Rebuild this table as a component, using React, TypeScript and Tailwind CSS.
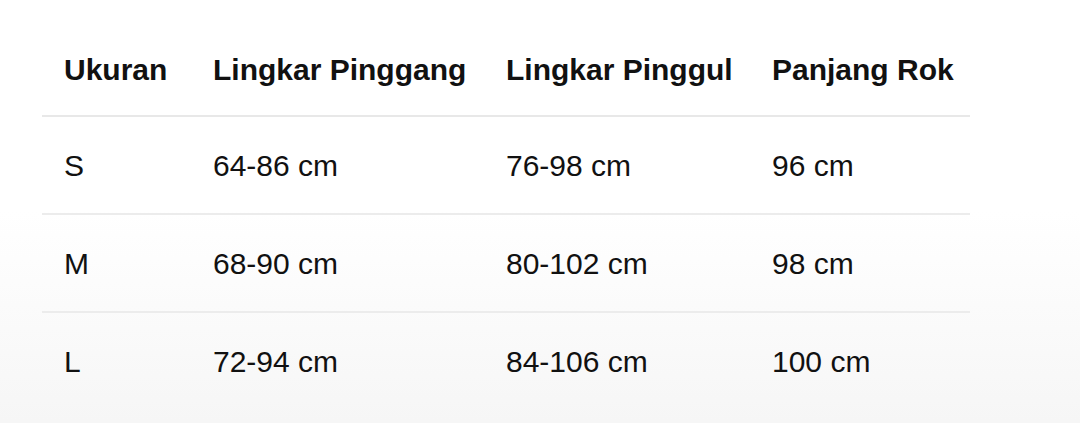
const headers = ['Ukuran', 'Lingkar Pinggang', 'Lingkar Pinggul', 'Panjang Rok'];

const rows = [
  ['S', '64-86 cm', '76-98 cm', '96 cm'],
  ['M', '68-90 cm', '80-102 cm', '98 cm'],
  ['L', '72-94 cm', '84-106 cm', '100 cm'],
];

const widths = ['w-[149px]', 'w-[293px]', 'w-[266px]', 'w-[220px]'];

export default function App() {
  return (
    <div
      className="h-[423px] w-[1080px] bg-gradient-to-b from-white from-50% to-[#f6f6f6] pt-[24px] pl-[42px] text-[#111]"
      style={{ fontFamily: '"Liberation Sans", Arial, sans-serif' }}
    >
      <table className="w-[928px] border-collapse">
        <thead>
          <tr className="h-[92px] border-b-2 border-[#e8e8e8]">
            {headers.map((h, i) => (
              <th
                key={h}
                className={`${widths[i]} pl-[22px] text-left align-middle text-[30px] font-bold`}
              >
                {h}
              </th>
            ))}
          </tr>
        </thead>
        <tbody>
          {rows.map((row, r) => (
            <tr
              key={row[0]}
              className={r < rows.length - 1 ? 'h-[98px] border-b-2 border-[#ececec]' : 'h-[98px]'}
            >
              {row.map((cell, i) => (
                <td key={i} className="pl-[22px] text-left align-middle text-[30px]">
                  {cell}
                </td>
              ))}
            </tr>
          ))}
        </tbody>
      </table>
    </div>
  );
}
